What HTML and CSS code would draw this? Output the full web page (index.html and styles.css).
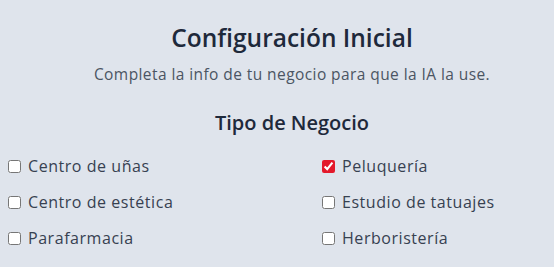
FILE: index.html
```html
<!DOCTYPE html>
<html lang="es">
<head>
<meta charset="utf-8">
<link rel="stylesheet" href="styles.css">
</head>
<body>
<main class="setup">
  <h1 class="title">Configuración Inicial</h1>
  <p class="subtitle">Completa la info de tu negocio para que la IA la use.</p>
  <h2 class="section">Tipo de Negocio</h2>
  <div class="options">
    <label class="opt"><input type="checkbox"> <span>Centro de uñas</span></label>
    <label class="opt"><input type="checkbox" checked> <span>Peluquería</span></label>
    <label class="opt"><input type="checkbox"> <span>Centro de estética</span></label>
    <label class="opt"><input type="checkbox"> <span>Estudio de tatuajes</span></label>
    <label class="opt"><input type="checkbox"> <span>Parafarmacia</span></label>
    <label class="opt"><input type="checkbox"> <span>Herboristería</span></label>
  </div>
</main>
</body>
</html>
```
FILE: styles.css
```css
html, body {
  margin: 0;
  padding: 0;
}
body {
  background: #dfe4ec;
  font-family: "Open Sans", "Noto Sans", sans-serif;
  width: 554px;
  height: 267px;
  overflow: hidden;
}
.setup {
  width: 568px;
  margin-left: 8px;
  padding-top: 22px;
}
.title {
  margin: 0;
  text-align: center;
  font-size: 24.5px;
  font-weight: 600;
  color: #1e293b;
  line-height: 32px;
}
.subtitle {
  margin: 10px 0 0;
  text-align: center;
  font-size: 15.5px;
  letter-spacing: 0.42px;
  color: #4b5563;
  line-height: 20px;
}
.section {
  margin: 26px 0 0;
  text-align: center;
  font-size: 20px;
  font-weight: 600;
  color: #1e293b;
  line-height: 26px;
}
.options {
  display: grid;
  grid-template-columns: 314px auto;
  row-gap: 12px;
  margin-top: 18px;
}
.opt {
  display: flex;
  align-items: center;
  gap: 7px;
  font-size: 16px;
  letter-spacing: 0.55px;
  color: #374151;
  line-height: 24px;
}
.opt input {
  margin: 0;
  width: 13px;
  height: 13px;
  accent-color: #e3192b;
}
```
